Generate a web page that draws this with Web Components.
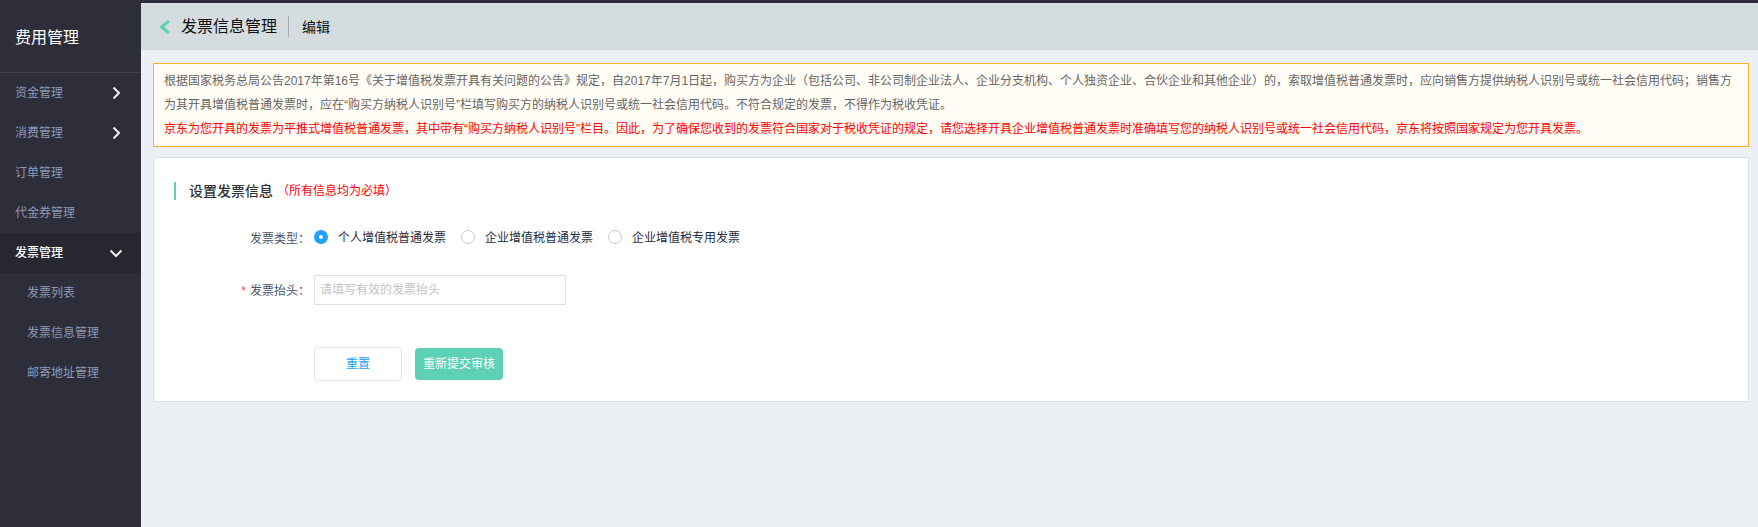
<!DOCTYPE html>
<html lang="zh-CN">
<head>
<meta charset="utf-8">
<title>发票信息管理</title>
<style>
html, body { margin: 0; min-height: 100vh; }
body {
  font: 12px/24px "Liberation Sans", "Noto Sans CJK SC", sans-serif;
  color: #666; background: #ebf0f5;
}
</style>
</head>
<body>
<invoice-app>
  <side-nav slot="nav" heading="费用管理">
    <nav-item arrow="right">资金管理</nav-item>
    <nav-item arrow="right">消费管理</nav-item>
    <nav-item>订单管理</nav-item>
    <nav-item>代金券管理</nav-item>
    <nav-item arrow="down" current>发票管理</nav-item>
    <nav-item sub>发票列表</nav-item>
    <nav-item sub>发票信息管理</nav-item>
    <nav-item sub>邮寄地址管理</nav-item>
  </side-nav>
  <page-header slot="header">发票信息管理<span slot="section">编辑</span></page-header>
  <notice-box>
    根据国家税务总局公告2017年第16号《关于增值税发票开具有关问题的公告》规定，自2017年7月1日起，购买方为企业（包括公司、非公司制企业法人、企业分支机构、个人独资企业、合伙企业和其他企业）的，索取增值税普通发票时，应向销售方提供纳税人识别号或统一社会信用代码；销售方为其开具增值税普通发票时，应在“购买方纳税人识别号”栏填写购买方的纳税人识别号或统一社会信用代码。不符合规定的发票，不得作为税收凭证。
    <span slot="warning">京东为您开具的发票为平推式增值税普通发票，其中带有“购买方纳税人识别号”栏目。因此，为了确保您收到的发票符合国家对于税收凭证的规定，请您选择开具企业增值税普通发票时准确填写您的纳税人识别号或统一社会信用代码，京东将按照国家规定为您开具发票。</span>
  </notice-box>
  <invoice-form></invoice-form>
</invoice-app>

<script>
const define = (name, html, setup) => {
  const template = document.createElement('template');
  template.innerHTML = html;
  customElements.define(name, class extends HTMLElement {
    constructor() {
      super();
      this.attachShadow({ mode: 'open' }).append(template.content.cloneNode(true));
    }
    connectedCallback() { if (setup) setup(this, this.shadowRoot); }
  });
};

define('invoice-app', `
<style>
:host { display: flex; min-height: 100vh; box-sizing: border-box; border-top: 3px solid #2d2e3a; }
main { flex: 1; min-width: 0; }
.content { display: grid; gap: 10px; padding: 13px 9px 24px 12px; }
</style>
<slot name="nav"></slot>
<main><slot name="header"></slot><div class="content"><slot></slot></div></main>`);

define('side-nav', `
<style>
:host { display: block; flex: none; width: 141px; background: #2d2e3a; }
h2 { margin: 0; padding: 0 15px; height: 69px; line-height: 70px; font-size: 16px; font-weight: 400; color: #fff; border-bottom: 1px solid #3d3f4b; }
</style>
<h2></h2><nav><slot></slot></nav>`,
(host, root) => { root.querySelector('h2').textContent = host.getAttribute('heading'); });

define('nav-item', `
<style>
:host { display: block; color: #8d99b8; }
:host([current]) { color: #fff; background: #262731; font-weight: 500; }
a { display: flex; align-items: center; justify-content: space-between; height: 40px; padding: 0 17px 0 15px; color: inherit; text-decoration: none; }
:host([sub]) a { padding-left: 27px; }
svg { display: none; width: 16px; height: 16px; fill: none; stroke: #eee; stroke-width: 2; }
:host([arrow]) svg { display: block; }
:host([arrow="down"]) svg { transform: rotate(90deg); }
</style>
<a href="#"><span><slot></slot></span><svg viewBox="0 0 16 16" aria-hidden="true"><path d="M5.500 2.500 11 8l-5.500 5.500"/></svg></a>`);

define('page-header', `
<style>
:host { display: flex; align-items: center; height: 47px; padding: 0 18px; background: #d5dcdf; color: #111; }
a { display: flex; margin-right: 10px; }
svg { width: 12px; height: 14px; fill: none; stroke: #5ed0b5; stroke-width: 3; }
h1 { margin: 0; font-size: 16px; font-weight: 400; }
.section { display: flex; align-items: center; height: 21px; margin-left: 11px; padding-left: 13px; border-left: 1px solid #a4aaad; font-size: 14px; }
</style>
<a href="#" aria-label="返回"><svg viewBox="0 0 12 14"><path d="M10 1 2.500 7l7.500 6"/></svg></a>
<h1><slot></slot></h1><div class="section"><slot name="section"></slot></div>`);

define('notice-box', `
<style>
:host { display: block; padding: 5px 10px; border: 1px solid #f9b326; background: #fffdf6; }
p { margin: 0; }
.warning { color: #f00; }
</style>
<p><slot></slot></p><p class="warning"><slot name="warning"></slot></p>`);

define('radio-option', `
<style>
:host { display: block; color: #1f2d3d; }
label { display: flex; align-items: center; gap: 10px; }
input { appearance: none; box-sizing: border-box; width: 14px; height: 14px; margin: 0 0 2px; border: 1px solid #bfcbd9; border-radius: 50%; background: #fff; }
input:checked { border: 5px solid #20a0ff; }
</style>
<label><input type="radio"><span><slot></slot></span></label>`,
(host, root) => {
  const input = root.querySelector('input');
  input.checked = host.hasAttribute('checked');
  input.addEventListener('change', () => {
    for (const other of host.parentNode.querySelectorAll('radio-option')) {
      if (other !== host) other.shadowRoot.querySelector('input').checked = false;
    }
  });
});

define('action-button', `
<style>
:host { display: block; }
button { display: block; box-sizing: border-box; width: 88px; height: 34px; padding: 0; border: 1px solid #dfe4ec; border-radius: 4px; background: #fff; color: #20a0ff; font: inherit; }
:host([primary]) button { height: 32px; border: 0; background: #5ed0b5; color: #fff; }
</style>
<button type="button"><slot></slot></button>`);

define('invoice-form', `
<style>
:host { display: block; padding: 21px 20px 20px; border: 1px solid #dae1e8; background: #fff; }
h2 { display: flex; align-items: center; margin: 0 0 22px; color: #333; font-size: 14px; font-weight: 500; }
h2::before { content: ""; width: 2px; height: 18px; margin-right: 13px; background: #5ed0b5; }
h2 small { margin-left: 4px; color: #f00; font-size: 12px; font-weight: 400; }
.row { display: grid; grid-template-columns: 136px 1fr; align-items: center; gap: 4px; color: #48576a; }
.row + .row { margin-top: 24px; }
.name { padding-top: 2px; text-align: right; }
.name i { margin-right: 4px; color: #ff4949; font-style: normal; }
.choices { display: flex; gap: 15px; }
input { display: block; box-sizing: border-box; width: 252px; height: 30px; padding: 0 5px; border: 1px solid #e0e0e0; background: #fff; color: #333; font: inherit; }
input::placeholder { color: #c4c4c4; opacity: 1; }
.actions { display: flex; align-items: center; gap: 13px; margin: 42px 0 0 140px; }
</style>
<h2>设置发票信息<small>（所有信息均为必填）</small></h2>
<div class="row"><span class="name" id="type">发票类型：</span>
<div class="choices" role="radiogroup" aria-labelledby="type">
<radio-option checked>个人增值税普通发票</radio-option><radio-option>企业增值税普通发票</radio-option><radio-option>企业增值税专用发票</radio-option>
</div></div>
<div class="row"><label class="name" for="title"><i>*</i>发票抬头：</label>
<div><input id="title" type="text" placeholder="请填写有效的发票抬头"></div></div>
<div class="actions"><action-button>重置</action-button><action-button primary>重新提交审核</action-button></div>`);
</script>
</body>
</html>
